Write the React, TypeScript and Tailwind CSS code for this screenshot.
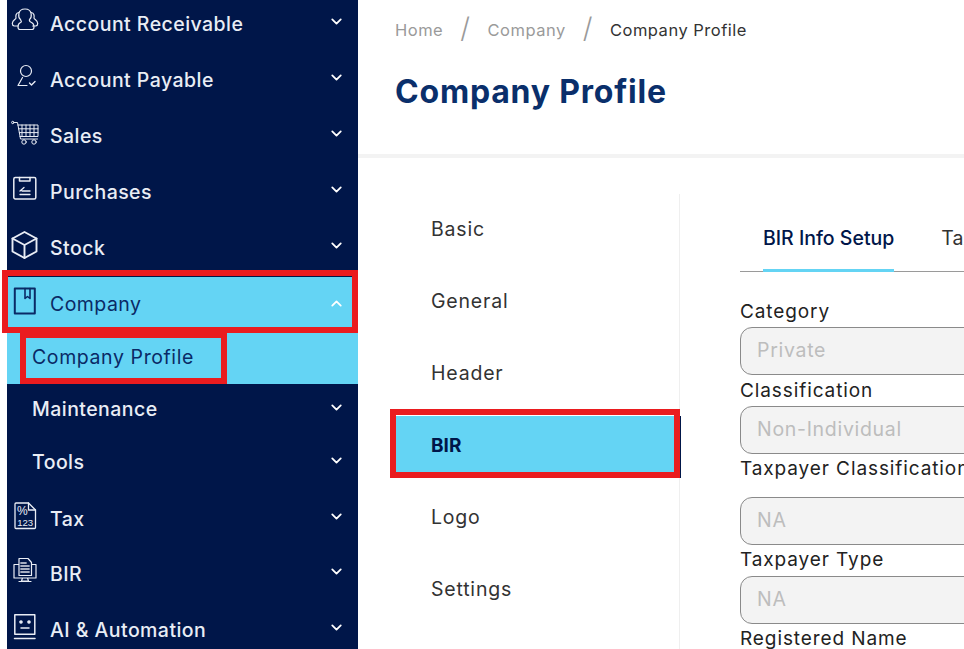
import { ChevronDown, ChevronUp } from "lucide-react";
import type { ReactNode } from "react";

const S = ({ children }: { children: ReactNode }) => (
  <svg viewBox="0 0 28 28" width="28" height="28" fill="none" stroke="currentColor" strokeWidth="1.200" strokeLinecap="round" strokeLinejoin="round">
    {children}
  </svg>
);

const Users = () => (
  <S>
    <path d="M9.500 11.500c-1.600-1-2-3-1.700-5.500C8.200 3 10.500 1 14 1s5.800 2 6.200 5c.3 2.500-.1 4.500-1.700 5.500-.5 1.600.3 2.300 2 3 2 .8 2.500 2 2.500 4.500 0 1.500-.7 2.500-2 2.500H9c-1.300 0-2-1-2-2.500 0-2.500.5-3.700 2.500-4.500 1.700-.7.500-1.400 0-3z" />
    <path d="M7.800 4.500C5 5 4.500 7.500 5 10c-.2 1.500-3.700 2-3.700 5.500 0 1.500.7 2.300 2 2.500h3.500" />
    <path d="M20.200 4.500C23 5 23.500 7.500 23 10c.2 1.500 3.700 2 3.700 5.500 0 1.500-.7 2.300-2 2.500h-3" />
  </S>
);
const UserCheck = () => (
  <S>
    <circle cx="15" cy="8" r="5.500" />
    <path d="M11.500 14.500 7 22.500h9" />
    <path d="M18.500 20l2 2 3.500-3.500" strokeWidth="1.400" />
  </S>
);
const Cart = () => (
  <S>
    <circle cx="1.800" cy="3.500" r="1.200" strokeWidth="1" />
    <path d="M3 3.500h3.500l3 16.500h17" strokeWidth="1" />
    <path d="M6.800 6h20.200v11.500H9M11 6v11.500M15 6v11.500M19 6v11.500M23 6v11.500M7.500 9.800H27M8.300 13.600H27" strokeWidth="1" />
    <circle cx="13" cy="23" r="2.200" strokeWidth="1" />
    <circle cx="23" cy="23" r="2.200" strokeWidth="1" />
  </S>
);
const Clipboard = () => (
  <S>
    <rect x="2.800" y="2.500" width="22" height="21.500" rx="1.500" strokeWidth="1.500" />
    <path d="M8.500 2.500v3.500h10.500V2.500" strokeWidth="1.500" />
    <path d="M9 19.500h10M11 16h8M13 12.500 9 16" strokeWidth="1.300" />
  </S>
);
const Box = () => (
  <S>
    <path d="M13.500 1 25.500 7.500v13L13.500 27 1.500 20.500v-13z" strokeWidth="1.900" />
    <path d="M1.500 7.500 13.500 14 25.500 7.500M13.500 14v13" strokeWidth="1.900" />
  </S>
);
const BookMark = () => (
  <S>
    <path d="M3.800 1.500h20v25h-20z" strokeWidth="2" />
    <path d="M14 1.500v10l2.500-2 2.500 2v-10" strokeWidth="1.600" />
  </S>
);
const TaxDoc = () => (
  <svg viewBox="0 0 28 28" width="28" height="28" fill="none" stroke="currentColor" strokeWidth="1.300" strokeLinecap="round" strokeLinejoin="round">
    <path d="M5 1h12.500l7 7v17.500c0 .6-.4 1-1 1H5c-.6 0-1-.4-1-1V2c0-.6.4-1 1-1z" />
    <path d="M17.500 1v7h7" />
    <text x="6" y="13" fontSize="12" fontWeight="500" fill="currentColor" stroke="none" fontFamily="Liberation Sans, sans-serif">%</text>
    <text x="6.200" y="23.500" fontSize="9.500" fill="currentColor" stroke="none" fontFamily="Liberation Sans, sans-serif" textLength="16" lengthAdjust="spacingAndGlyphs">123</text>
  </svg>
);
const Monitor = () => (
  <S>
    <path d="M3 7.500h22v13.500H3zM11.500 21h5l1 3h-7zM8 24.500h12" />
    <path d="M8 18.500V1.500h9l3.500 4v13z" fill="#001649" />
    <path d="M10 6h5M10 9h8M10 12h8M10 15h8" strokeWidth="1.800" opacity=".7" />
  </S>
);
const Bot = () => (
  <S>
    <rect x="3.800" y="1.800" width="20" height="19.500" strokeWidth="1.500" />
    <circle cx="10" cy="9" r="1.200" fill="currentColor" />
    <circle cx="18" cy="9" r="1.200" fill="currentColor" />
    <path d="M10 15h8M3.500 25.500h20.500" strokeWidth="1.500" />
  </S>
);

function Row({ icon, label, cls }: { icon: ReactNode; label: string; cls: string }) {
  return (
    <div className={`flex items-center text-[#e9edf5] ${cls}`}>
      <div className="w-[43px] pl-[4px] -mt-[7px] flex justify-start">{icon}</div>
      <span className="flex-1 text-[19.500px] tracking-[0.45px] font-medium">{label}</span>
      <ChevronDown className="mr-[13px] -mt-[7px]" size={17} strokeWidth={2.500} color="#ffffff" />
    </div>
  );
}

function Sub({ label, cls }: { label: string; cls: string }) {
  return (
    <div className={`flex items-center pl-[25px] text-[#e9edf5] ${cls}`}>
      <span className="flex-1 text-[19.500px] tracking-[0.45px] font-medium">{label}</span>
      <ChevronDown className="mr-[13px] -mt-[5px]" size={17} strokeWidth={2.500} color="#ffffff" />
    </div>
  );
}

function Field({ label, cls }: { label: string; cls: string }) {
  return (
    <div className={cls}>
      <div className="text-[19px] tracking-[0.9px] leading-[24px] text-[#222222] whitespace-nowrap">{label}</div>
    </div>
  );
}

function Input({ value }: { value: string }) {
  return (
    <div className="h-[48px] w-[300px] shrink-0 rounded-[12px] border border-[#8a8a8a] bg-[#f3f3f3] pl-[16px] flex items-center text-[19.500px] tracking-[0.7px] text-[#bdbdbd]">
      {value}
    </div>
  );
}

const tabs = ["Basic", "General", "Header", "BIR", "Logo", "Settings"];

export default function App() {
  return (
    <div className="w-[964px] h-[649px] overflow-hidden bg-white flex font-['Inter','Liberation_Sans',sans-serif] relative">
      <aside className="ml-[7px] w-[351px] h-[649px] shrink-0 bg-[#001649] flex flex-col overflow-hidden">
        <div className="-mt-[3px]" />
        <Row cls="h-[56px] shrink-0" icon={<Users />} label="Account Receivable" />
        <Row cls="h-[55.500px] shrink-0" icon={<UserCheck />} label="Account Payable" />
        <Row cls="h-[56px] shrink-0" icon={<Cart />} label="Sales" />
        <Row cls="h-[56px] shrink-0" icon={<Clipboard />} label="Purchases" />
        <Row cls="h-[56px] shrink-0" icon={<Box />} label="Stock" />
        <div className="h-[56px] shrink-0 bg-[#64d4f4] text-[#0a2a66] flex items-center">
          <div className="w-[43px] pl-[4px] -mt-[7px]"><BookMark /></div>
          <span className="flex-1 text-[19.500px] tracking-[0.45px]">Company</span>
          <ChevronUp className="mr-[13px] -mt-[3px]" size={17} strokeWidth={2.500} color="#ffffff" />
        </div>
        <div className="h-[51px] shrink-0 bg-[#64d4f4] text-[#0a2a66] flex items-center pl-[25px]">
          <span className="text-[19.500px] tracking-[0.6px]">Company Profile</span>
        </div>
        <Sub cls="h-[53px] shrink-0" label="Maintenance" />
        <Sub cls="h-[53px] shrink-0" label="Tools" />
        <Row cls="h-[60px] shrink-0" icon={<TaxDoc />} label="Tax" />
        <Row cls="h-[50px] shrink-0" icon={<Monitor />} label="BIR" />
        <Row cls="h-[62px] shrink-0" icon={<Bot />} label="AI & Automation" />
      </aside>

      <main className="flex-1 min-w-0 flex flex-col">
        <div className="h-[154px] shrink-0 pl-[37px] border-b-[4px] border-[#f3f3f3] box-content">
          <div className="flex items-center h-[60px] text-[16.500px] tracking-[0.5px]">
            <span className="text-[#9a9a9a]">Home</span>
            <span className="mx-[17px] text-[#9a9a9a] text-[28px] font-light leading-none -mt-[4px]">/</span>
            <span className="text-[#9a9a9a]">Company</span>
            <span className="mx-[17px] text-[#9a9a9a] text-[28px] font-light leading-none -mt-[4px]">/</span>
            <span className="text-[#333333]">Company Profile</span>
          </div>
          <h1 className="mt-[12px] text-[32px] tracking-[0.8px] leading-[40px] font-bold text-[#0a2f6b]">Company Profile</h1>
        </div>

        <div className="flex flex-1 min-h-0 pt-[36px]">
          <nav className="w-[322px] shrink-0 border-r border-[#efefef] flex flex-col">
            {tabs.map((t) =>
              t === "BIR" ? (
                <div key={t} className="h-[72px] flex items-center pl-[37px] -mr-[2px] shrink-0">
                  <div className="h-[62px] mt-[2px] w-full bg-[#64d4f4] border-r-[3px] border-[#001649] flex items-center pl-[36px] text-[19px] font-bold text-[#001649]">
                    <span className="-mt-[2px]">BIR</span>
                  </div>
                </div>
              ) : (
                <div key={t} className="h-[72px] flex items-center pl-[73px] text-[19.500px] tracking-[0.8px] text-[#333333] shrink-0">
                  {t}
                </div>
              )
            )}
          </nav>

          <section className="flex-1 min-w-0 pl-[60px] flex flex-col overflow-hidden">
            <div className="h-[78px] shrink-0 border-b border-[#9a9a9a] flex items-end whitespace-nowrap">
              <div className="ml-[23px] w-[132px] h-[78px] border-b-[3px] border-[#64d4f4] -mb-[1px] flex items-center pt-[14px] text-[19.500px] font-medium text-[#001649]">
                BIR Info Setup
              </div>
              <div className="ml-[47px] h-[78px] flex items-center pt-[14px] text-[19.500px] text-[#333333]">Tax</div>
            </div>
            <div className="pt-[28px] flex flex-col">
              <Field cls="h-[27px] shrink-0" label="Category" />
              <Input value="Private" />
              <Field cls="h-[31px] shrink-0 pt-[4px]" label="Classification" />
              <Input value="Non-Individual" />
              <Field cls="h-[43px] shrink-0 pt-[3px]" label="Taxpayer Classification" />
              <Input value="NA" />
              <Field cls="h-[31px] shrink-0 pt-[3px]" label="Taxpayer Type" />
              <Input value="NA" />
              <Field cls="h-[30px] shrink-0 pt-[3px]" label="Registered Name" />
            </div>
          </section>
        </div>
      </main>

      <div className="absolute left-[2px] top-[270px] w-[356px] h-[63px] border-[6px] border-[#ea1c1f] pointer-events-none" />
      <div className="absolute left-[20px] top-[332px] w-[207px] h-[52px] border-[6px] border-[#ea1c1f] pointer-events-none" />
      <div className="absolute left-[390px] top-[409px] w-[290px] h-[69px] border-[6px] border-[#ea1c1f] pointer-events-none" />
    </div>
  );
}
